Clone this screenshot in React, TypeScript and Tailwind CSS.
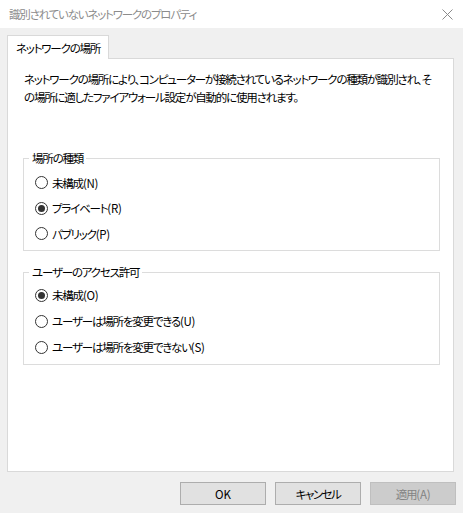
import React from "react";

type RadioProps = {
  label: string;
  hotkey: string;
  checked?: boolean;
  h: string;
};

const Radio = ({ label, hotkey, checked, h }: RadioProps) => {
  return (
    <div className={`flex items-center pl-[11px] ${h}`}>
      <span className="flex h-[13px] w-[13px] shrink-0 items-center justify-center rounded-full border border-[#333333] bg-white">
        {checked && <span className="h-[7px] w-[7px] rounded-full bg-[#333333]" />}
      </span>
      <span className="ml-[4px] whitespace-nowrap">
        {label}
        <span className="tracking-[-0.3px]">({hotkey})</span>
      </span>
    </div>
  );
};

const App = () => {
  return (
    <div
      className="flex h-[513px] w-[463px] flex-col overflow-hidden bg-[#f0f0f0] text-[11.5px] leading-[16px] tracking-[-1.2px] text-black [font-feature-settings:'palt']"
      style={{ fontFamily: '"Noto Sans CJK JP", "Noto Sans", sans-serif' }}
    >
      {/* title bar */}
      <div className="flex h-[28px] items-center justify-between bg-white pl-[9px] pr-[10px]">
        <span className="whitespace-nowrap text-[#8c8c8c]">識別されていないネットワークのプロパティ</span>
        <svg width="11" height="11" viewBox="0 0 11 11">
          <path d="M0.5 0.5 L10.5 10.5 M10.5 0.5 L0.5 10.5" stroke="#8a8a8a" strokeWidth="1" />
        </svg>
      </div>

      {/* tabs */}
      <div className="mt-[7px] flex pl-[7px]">
        <div className="relative z-10 -mb-px flex h-[24px] w-[102px] items-center whitespace-nowrap border border-b-0 border-[#d9d9d9] bg-white pl-[8px]">
          ネットワークの場所
        </div>
      </div>

      {/* panel */}
      <div className="mx-[7px] flex h-[414px] w-[447px] flex-col border border-[#d9d9d9] bg-white">
        <p className="mt-[11px] whitespace-nowrap pl-[16px] leading-[18px]">
          ネットワークの場所により、コンピューターが接続されているネットワークの種類が識別され、そ
          <br />
          の場所に適したファイアウォール設定が自動的に使用されます。
        </p>

        <fieldset className="ml-[15px] mr-[13px] mt-[44px] border border-[#dcdcdc] pb-[4px]">
          <legend className="ml-[5px] px-[3px]">場所の種類</legend>
          <div className="pt-[4px]">
            <Radio label="未構成" hotkey="N" h="h-[25px]" />
            <Radio label="プライベート" hotkey="R" checked h="h-[26px]" />
            <Radio label="パブリック" hotkey="P" h="h-[25px]" />
          </div>
        </fieldset>

        <fieldset className="ml-[15px] mr-[13px] mt-[13px] border border-[#dcdcdc] pb-[4px]">
          <legend className="ml-[5px] px-[3px]">ユーザーのアクセス許可</legend>
          <div className="pt-[2px]">
            <Radio label="未構成" hotkey="O" checked h="h-[26px]" />
            <Radio label="ユーザーは場所を変更できる" hotkey="U" h="h-[26px]" />
            <Radio label="ユーザーは場所を変更できない" hotkey="S" h="h-[26px]" />
          </div>
        </fieldset>
      </div>

      {/* buttons */}
      <div className="mt-[10px] flex justify-end gap-[9px] pr-[7px]">
        <button className="h-[23px] w-[86px] border border-[#adadad] bg-[#e1e1e1] tracking-normal">OK</button>
        <button className="h-[23px] w-[86px] border border-[#adadad] bg-[#e1e1e1] tracking-[-1.5px]">キャンセル</button>
        <button className="h-[23px] w-[86px] border border-[#bfbfbf] bg-[#cccccc] text-[#838383]">
          適用<span className="tracking-[-0.3px]">(A)</span>
        </button>
      </div>
    </div>
  );
};

export default App;
